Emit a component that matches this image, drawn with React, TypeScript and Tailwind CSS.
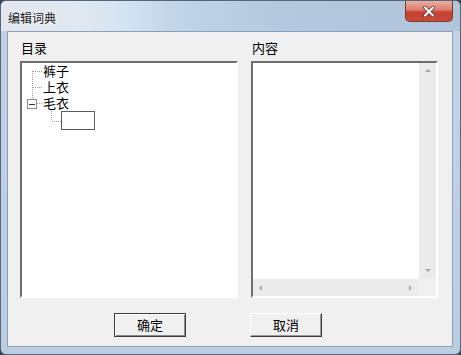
import React from "react";

const font = { fontFamily: '"Noto Sans CJK SC", "Noto Sans", sans-serif' };

function Arrow({ dir }: { dir: "up" | "down" | "left" | "right" }) {
  const pts = {
    up: "1,5 4,2 7,5",
    down: "1,2 4,5 7,2",
    left: "5,1 2,4 5,7",
    right: "2,1 5,4 2,7",
  }[dir];
  return (
    <svg width="8" height="8" viewBox="0 0 8 8">
      <polygon points={pts} fill="#a8a8a8" />
    </svg>
  );
}

function Dots({ x1, y1, x2, y2 }: { x1: number; y1: number; x2: number; y2: number }) {
  return (
    <line
      x1={x1}
      y1={y1}
      x2={x2}
      y2={y2}
      stroke="#a0a0a0"
      strokeWidth="1"
      strokeDasharray="1 1"
      shapeRendering="crispEdges"
    />
  );
}

function TreeRow({ label, first }: { label: string; first?: boolean }) {
  return (
    <div className="flex h-[16px] items-center">
      <svg width="21" height="16" className="shrink-0">
        <Dots x1={10.5} y1={first ? 8 : 0} x2={10.5} y2={16} />
        <Dots x1={11} y1={8.5} x2={20} y2={8.5} />
      </svg>
      <span className="block h-[16px] text-[13px] leading-[16px] text-black">{label}</span>
    </div>
  );
}

export default function App() {
  return (
    <div className="w-[461px] h-[355px] bg-[#3a434d]" style={font}>
      <div className="flex h-full flex-col rounded-[6px] border border-[#52667c] bg-[linear-gradient(to_bottom,#c3d3e4,#bccde0)]">
        {/* title bar */}
        <div className="flex h-[30px] items-start rounded-t-[5px] bg-[linear-gradient(to_right,#e2e7ed_0%,#e1e8ef_18%,#d4e3f2_27%,#c2d4e7_38%,#b5c8dd_60%,#b0c4da_100%)] pl-[7px] pr-[7px]">
          <span className="mt-[10px] text-[12px] leading-[14px] text-[#1a1a1a] [text-shadow:0_0_6px_#ffffff]">
            编辑词典
          </span>
          <div className="ml-auto flex h-[21px] w-[48px] items-center justify-center rounded-b-[5px] border border-t-0 border-[#7a3a30] bg-[linear-gradient(to_bottom,#eab0a2_0%,#dc7c6c_45%,#c9402f_55%,#c44a37_100%)]">
            <svg width="12" height="11" viewBox="0 0 12 11">
              <path d="M2 1.5 L10 9.5 M10 1.5 L2 9.5" stroke="#5a3a34" strokeWidth="3.6" strokeLinecap="round" />
              <path d="M2 1.5 L10 9.5 M10 1.5 L2 9.5" stroke="#ffffff" strokeWidth="2" strokeLinecap="round" />
            </svg>
          </div>
        </div>

        {/* client area */}
        <div className="ml-[6px] mr-[7px] h-[316px] border border-[#8b9fb6] bg-[#f0f0f0] pl-[12px] pt-[7px]">
          <div className="flex gap-[13px]">
            {/* 目录 */}
            <div className="w-[218px]">
              <div className="mb-[4px] h-[18px] pl-[1px] text-[13px] leading-[18px] text-black">目录</div>
              <div className="h-[237px] border-2 border-t-[#6e6e6e] border-l-[#6e6e6e] border-r-[#ffffff] border-b-[#ffffff] bg-white">
                <div className="flex flex-col">
                  <TreeRow label="裤子" first />
                  <TreeRow label="上衣" />
                  <div className="flex h-[16px] items-center">
                    <svg width="21" height="16" className="shrink-0">
                      <Dots x1={10.5} y1={0} x2={10.5} y2={4} />
                      <rect x="5.5" y="4.5" width="9" height="9" fill="#fff" stroke="#8c8c8c" shapeRendering="crispEdges" />
                      <line x1="7" y1="9" x2="13" y2="9" stroke="#333" shapeRendering="crispEdges" />
                      <Dots x1={15} y1={8.5} x2={20} y2={8.5} />
                    </svg>
                    <span className="block h-[16px] text-[13px] leading-[16px] text-black">毛衣</span>
                  </div>
                  <div className="flex h-[19px] items-center">
                    <svg width="39" height="19" className="shrink-0">
                      <Dots x1={29.5} y1={0} x2={29.5} y2={10} />
                      <Dots x1={30} y1={10.5} x2={39} y2={10.5} />
                    </svg>
                    <div className="h-[19px] w-[34px] border border-[#5c5c5c] bg-white" />
                  </div>
                </div>
              </div>
            </div>

            {/* 内容 */}
            <div className="w-[187px]">
              <div className="mb-[4px] h-[18px] pl-[1px] text-[13px] leading-[18px] text-black">内容</div>
              <div className="flex h-[237px] flex-col border-2 border-t-[#6e6e6e] border-l-[#6e6e6e] border-r-[#ffffff] border-b-[#ffffff] bg-white">
                <div className="flex flex-1">
                  <div className="flex-1 bg-white" />
                  <div className="flex w-[17px] flex-col items-center justify-between bg-[#ebebeb] py-[4px]">
                    <Arrow dir="up" />
                    <Arrow dir="down" />
                  </div>
                </div>
                <div className="flex h-[17px]">
                  <div className="flex flex-1 items-center justify-between bg-[#ebebeb] px-[4px]">
                    <Arrow dir="left" />
                    <Arrow dir="right" />
                  </div>
                  <div className="w-[17px] bg-[#f0f0f0]" />
                </div>
              </div>
            </div>
          </div>

          {/* buttons */}
          <div className="mt-[15px] flex gap-[64px] pl-[94px]">
            <button className="flex h-[24px] w-[72px] items-center justify-center border border-[#3c3c3c] bg-[#f0f0f0] text-[13px] leading-[16px] text-black shadow-[inset_1px_1px_0_#ffffff,inset_-1px_-1px_0_#8a8a8a]">
              确定
            </button>
            <button className="flex h-[24px] w-[72px] items-center justify-center border border-t-[#ffffff] border-l-[#ffffff] border-r-[#3c3c3c] border-b-[#3c3c3c] bg-[#f0f0f0] text-[13px] leading-[16px] text-black shadow-[inset_-1px_-1px_0_#9a9a9a]">
              取消
            </button>
          </div>
        </div>
      </div>
    </div>
  );
}
